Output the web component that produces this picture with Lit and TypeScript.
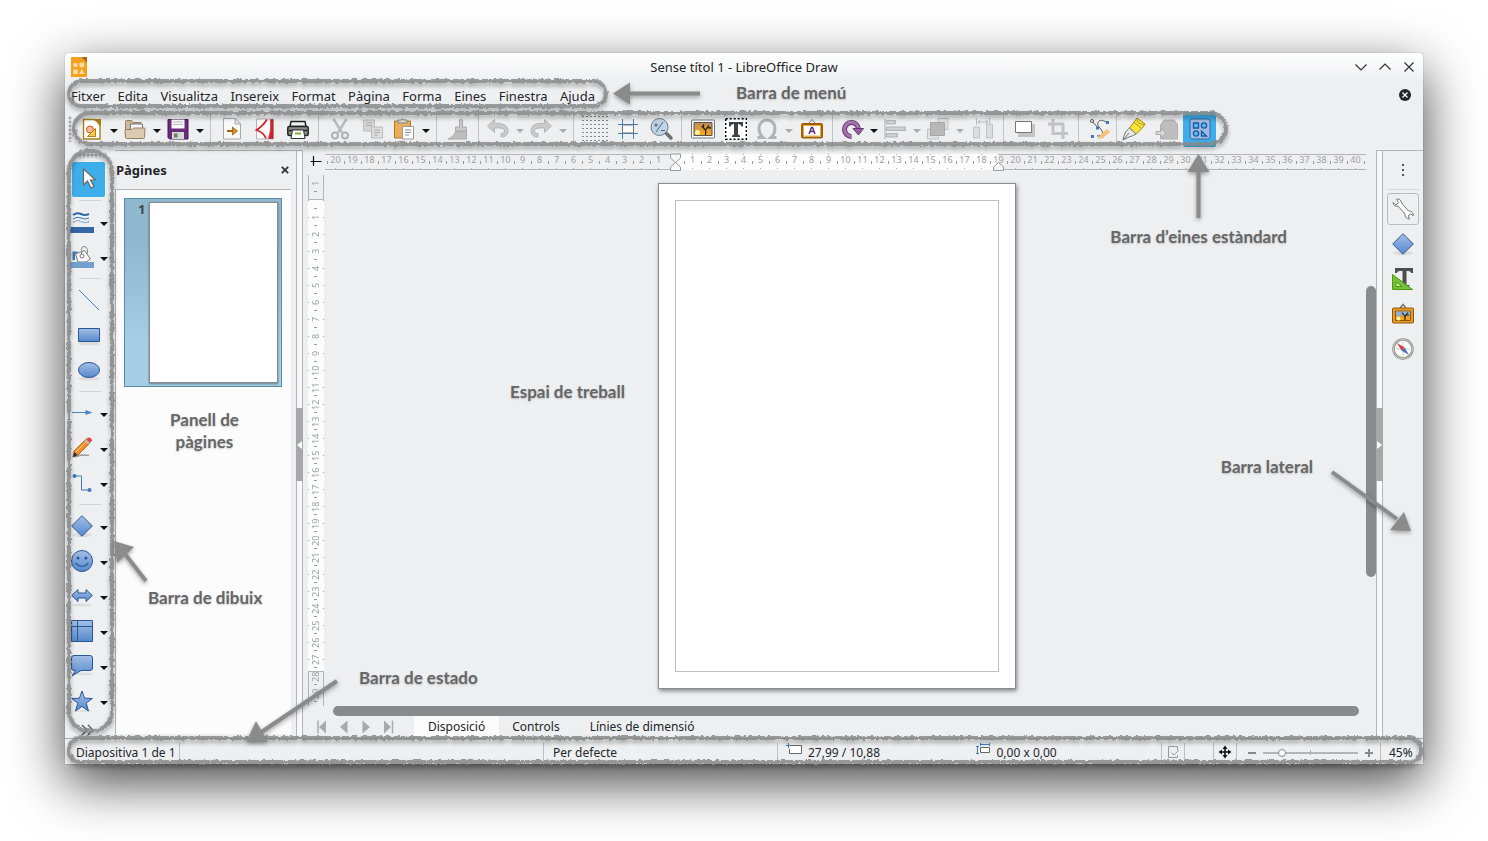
import { LitElement, html, svg, css, nothing } from "lit";
import { customElement } from "lit/decorators.js";
import { classMap } from "lit/directives/class-map.js";

const BLUE = "url(#blue)";
const NAVY = "#2c5596";

// Every glyph is drawn on a 22 x 22 grid.
const glyphs: Record<string, unknown> = {
  app: svg`<path d="M3 1h10l6 6v14H3z" fill="#f5a01d"/><path d="M13 1h6v6z" fill="#a8690a"/><circle cx="7.500" cy="9" r="2.300" fill="#fbdcae"/><path d="M11.500 6.700h4.600v4.600h-4.600zM5.200 13.500h4.600v4.500H5.200zM11 18l2.800-5 2.800 5z" fill="#fbdcae"/>`,
  new: svg`<path d="M2.500 1.500h10.500l6 6v13.500h-16.500z" fill="#fff" stroke="#a5811c" stroke-width="1.400"/><path d="M13 1h7v7z" fill="#a5811c"/><path d="M14 2.500l4 4h-4z" fill="#fff6d8"/><circle cx="9" cy="11.500" r="3.500" fill="#f7b79b" stroke="#d9531e"/><path d="M6.500 18.500l8-8v8z" fill="#f7c94b" stroke="#b97f10"/>`,
  open: svg`<path d="M1.500 19V3.500q0-1 1-1h5l1.500 2h8v4" fill="#cdb99c" stroke="#98805e"/><path d="M6.500 12V6h12v6" fill="#fafafa" stroke="#777"/><path d="M1.500 19.500l-.5-7q0-1 1-1h6l1.500-1.500H20q1 0 1 1l-.5 8.500q0 1-1 1h-17q-1 0-1-1z" fill="#dccbb0" stroke="#98805e"/>`,
  save: svg`<path d="M1 1.500h20V21H2.500L1 19.500z" fill="#6b2d7b" stroke="#47165a"/><path d="M4.500 1.500h13v9h-13z" fill="#fafafa"/><path d="M6 4h10M6 6.500h10" stroke="#bcbcbc"/><path d="M5 14h12v7H5z" fill="#d5d9d2"/><path d="M7 15.500h3.500v4H7z" fill="#6d7a6a"/>`,
  import: svg`<path d="M2.500 .5h12l5 5v15.500h-17z" fill="#f8f8f8" stroke="#aaa"/><path d="M14 .5v5.500h5.500" fill="#ddd" stroke="#aaa"/><path d="M6 13h7" stroke="#a86400" stroke-width="2"/><path d="M11.500 9l5 4-5 4z" fill="#d98e1f" stroke="#8f5500" stroke-width=".7"/>`,
  pdf: svg`<path d="M2.500 1h17v20h-17z" fill="#fafafa" stroke="#b5b5b5"/><path d="M13 1.500C10 6 7 9.500 2.500 12 8 14 10.500 16 12 20.500" fill="none" stroke="#d4212b" stroke-width="1.800"/><path d="M16.500 1.500H19v19h-4.500q3-8 2-19z" fill="#d4212b" stroke="#b5161f" stroke-width=".6"/>`,
  print: svg`<path d="M4 3.500h14l1 5H3z" fill="#f2f2f2" stroke="#222" stroke-width="1.500"/><rect x=".8" y="8.500" width="20.400" height="9" rx="1.500" fill="#8b8f8b" stroke="#222" stroke-width="1.500"/><path d="M2 12.500h18" stroke="#222" stroke-width="1.500"/><path d="M5.500 12h11l1.500 8.500H4z" fill="#fff" stroke="#333"/><path d="M8 15.500h6" stroke="#73b03b" stroke-width="2"/>`,
  cut: svg`<path d="M4.500 1l8.500 13.500M17.500 1L9 14.500" stroke="#bbb" stroke-width="2.500"/><circle cx="6" cy="17.500" r="3" fill="none" stroke="#b0b0b0" stroke-width="2"/><circle cx="16" cy="17.500" r="3" fill="none" stroke="#b0b0b0" stroke-width="2"/>`,
  copy: svg`<path d="M1.500 2h11v11h-11z" fill="#d5d5d5" stroke="#bbb"/><path d="M4 5h6M4 7.500h6" stroke="#aaa"/><path d="M9.500 9h11v11h-11z" fill="#ddd" stroke="#bbb"/><path d="M12 12h6M12 14.500h6M12 17h4" stroke="#aaa"/>`,
  paste: svg`<path d="M1.500 3h16v17h-16z" fill="#e9ae5b" stroke="#b27825"/><path d="M5 4V2h3q1.500-2.500 3 0h3v3H5z" fill="#d5d5d5" stroke="#888"/><path d="M9.500 8.500h11V21h-11z" fill="#fff" stroke="#999"/><path d="M12 12h6M12 14.500h6M12 17h4" stroke="#888"/>`,
  brush: svg`<path d="M12.500 2q1.500-2 3 0v7h4v4H8.500V9h4z" fill="#c9c9c9" stroke="#aaa"/><path d="M8.500 13.500H19.500V21H1q6-2 7.500-7.500z" fill="#bdbdbd" stroke="#aaa"/>`,
  undo: svg`<path d="M.5 8l7-6.500v4c9-1 13.500 2.500 13.500 7.500 0 4-3 6-7 6v-3.500c2.500 0 3.500-1 3.500-2.500 0-2.500-3-3.500-10-3v4.500z" fill="#cacaca" stroke="#b5b5b5"/>`,
  redo: svg`<path d="M21.500 8l-7-6.500v4C5.500 4.500 1 8 1 13c0 4 3 6 7 6v-3.500c-2.500 0-3.500-1-3.500-2.500 0-2.500 3-3.500 10-3v4.500z" fill="#cacaca" stroke="#b5b5b5"/>`,
  grid: svg`${[0, 1, 2, 3, 4, 5, 6].map((r) => [0, 1, 2, 3, 4, 5, 6].map((c) => svg`<path d="M${c * 4 - 1.5} ${r * 4 - 2}h1v1h-1z" fill="#222"/>`))}`,
  lines: svg`<path d="M5.500 1v20M16.500 1v20M1 6.500h20M1 15.500h20" stroke="#3f7fc0"/><path d="M5.500 7h11v8h-11z" fill="#fafafa" stroke="#777"/>`,
  zoom: svg`<path d="M15 14l6 6" stroke="#6e7070" stroke-width="3.500" stroke-linecap="round"/><circle cx="9.500" cy="9" r="8.500" fill="#c3d3e6" stroke="#6e7b86"/><path d="M4 7h4M6 5v4M11 12.500h4M6 14l7-10" stroke="#44658c"/>`,
  image: svg`<rect x="-.5" y="2" width="23" height="18" rx="1" fill="#fafafa" stroke="#777"/><path d="M2 4.500h18v13H2z" fill="url(#sunset)" stroke="#555"/><circle cx="5.500" cy="14.500" r="2.500" fill="#fff4a0"/><path d="M13.500 17q.5-4 0-5l-4-4M13.500 12l3.500-5M11.500 10v-4M15 9.500l4 .5" stroke="#35240f" stroke-width="1.300" fill="none"/>`,
  text: svg`<path d="M.7.700h20.600v20.600H.7z" fill="#fff" stroke="#000" stroke-width="1.400" stroke-dasharray="2 2"/><path d="M4 4h14v4.500h-1.500Q16 6 13 6v9.500q0 2 2 2V19H7v-1.500q2 0 2-2V6Q6 6 5.500 8.500H4z" fill="#3c4246"/>`,
  omega: svg`<path d="M1.500 19.500h5.500C3.500 16.500 3 13 3 10a8 8 0 0116 0c0 3-.5 6.500-4 9.500h5.500" fill="none" stroke="#b1b1b1" stroke-width="3"/>`,
  fontwork: svg`<path d="M8 5l3-3.500L14 5" fill="none" stroke="#777"/><rect x="1" y="6" width="20" height="13.500" rx="1" fill="#fff" stroke="#a05f05" stroke-width="2"/><rect x="2.500" y="7.500" width="17" height="10.500" fill="none" stroke="#efad4a"/><path d="M8 16l2.500-6.500h1L14 16M9 13.500h4" fill="none" stroke="#5c2e7e" stroke-width="1.500"/>`,
  rotate: svg`<path d="M10.500 18.500A7 7 0 1117.500 11" fill="none" stroke="#65356f" stroke-width="5"/><path d="M10 18.300A7 7 0 1117.500 11" fill="none" stroke="#a675ae" stroke-width="3"/><path d="M12 10.500h10.500l-5 6.500z" fill="#9661a0" stroke="#65356f"/>`,
  align: svg`<path d="M1 1v20" stroke="#aaa"/><path d="M2.500 2.500h9v3.500h-9zM2.500 9h19v3.500h-19zM2.500 15.500h11v3.500h-11z" fill="#cfcfcf" stroke="#b2b2b2"/>`,
  arrange: svg`<path d="M11 .5h10v11H11zM.5 11h11v10H.5z" fill="#e0e0e0" stroke="#c2c2c2"/><path d="M3.500 4.500h14v13h-14z" fill="#b8b8b8" stroke="#a7a7a7"/>`,
  distribute: svg`<path d="M1.500 9h6v11h-6zM14.500 6h6v14h-6z" fill="#dcdcdc" stroke="#c2c2c2"/><path d="M4.500 0v7M17.500 0v5M6 4h10M8 2L6 4l2 2M14 2l2 2-2 2" fill="none" stroke="#bbb"/>`,
  shadow: svg`<path d="M4 6h17v13H4z" fill="#c4c4c4"/><path d="M1.500 3.500h16v11h-16z" fill="#fff" stroke="#777"/>`,
  crop: svg`<path d="M6 1v14.500h15M1 6h15v15" fill="none" stroke="#c3c3c3" stroke-width="3"/>`,
  points: svg`<path d="M3 3l7 8M8 18c6 0 8-3 2-9C6 4 12 0 17 4" fill="none" stroke="#555"/><circle cx="3" cy="3" r="1.500" fill="#fff" stroke="#555"/><path d="M17 3h3v3h-3zM7 8.500h3v3H7zM2 17h3v3H2z" fill="#3c7bc4"/><path d="M9 21l2-4 7-6 3 3-7 6z" fill="#f4c07a"/>`,
  glue: svg`<path d="M14 0l8 6q-1 3-9 10L6.500 10z" fill="#f8e33c" stroke="#a18b12"/><path d="M14 1.500q0 4.500 7 5M11 4.500l7 5.500" stroke="#b79b10" fill="none"/><path d="M6.500 10l6.500 6q-3 2-7 3L0 22q1-8 6.500-12z" fill="#e9e9e4" stroke="#777"/><path d="M0 22l6-7" stroke="#777"/>`,
  extrusion: svg`<path d="M4.500 7L8 2h10l3.500 4v15h-17z" fill="#bdbdbd" stroke="#b0b0b0"/><path d="M0 13.500h5v-3l5 4.500-5 4.500v-3H0z" fill="#dadada" stroke="#aaa"/>`,
  shapes: svg`<rect x="1" y="1" width="20" height="20" rx="2" fill="#a0bbe0" stroke="#2f64a6"/><path d="M4.500 5h5v5h-5z" fill="#5bbcf0" stroke="#1c57a0" stroke-width="1.300"/><circle cx="15" cy="7.500" r="2.600" fill="#5bbcf0" stroke="#1c57a0" stroke-width="1.300"/><circle cx="7" cy="15.500" r="2.600" fill="#5bbcf0" stroke="#1c57a0" stroke-width="1.300"/><path d="M12.500 13v5h5z" fill="#5bbcf0" stroke="#1c57a0" stroke-width="1.300"/>`,
  select: svg`<path d="M5.500 1v16l4-4 3.500 7 3-1.500L12.500 12h5z" fill="#fff" stroke="#666" stroke-width="1.200"/>`,
  linecolor: svg`<path d="M2 4q4-3 8-1t8 0" fill="none" stroke="#2f66a8" stroke-width="2"/><path d="M2 8q4-3 8-1t8 0" fill="none" stroke="#3a74b5"/><path d="M2 11.500q4-3 8-1t8 0" fill="none" stroke="#3a74b5" stroke-dasharray="2 1"/><path d="M-1 16h24v6H-1z" fill="#3465a4"/>`,
  fillcolor: svg`<path d="M1.500 14V5.500h5v2H4v6.500z" fill="#3f78b7"/><path d="M4.500 8l9-3.500 6 8.500-4.500 3H7z" fill="#fafafa" stroke="#777"/><path d="M10.500 9V3.500q0-3 2.500-3t3.500 3v4" fill="none" stroke="#888"/><circle cx="11" cy="10" r="2" fill="#fff" stroke="#777"/><path d="M-1 16h24v6H-1z" fill="#729fcf"/>`,
  line: svg`<path d="M1 1l20 20" stroke="#3f78b7"/>`,
  rect: svg`<ellipse cx="11" cy="19.500" rx="11" ry="2" fill="#ddd"/><path d="M.5 4.500h21v13H.5z" fill="${BLUE}" stroke="${NAVY}"/>`,
  ellipse: svg`<ellipse cx="11" cy="19.500" rx="11" ry="2" fill="#ddd"/><ellipse cx="11" cy="11" rx="10.500" ry="7.500" fill="${BLUE}" stroke="${NAVY}"/>`,
  arrow: svg`<path d="M1 10.500h15" stroke="#4a86c2"/><path d="M14.500 8l7 2.500-7 2.500z" fill="#4a86c2"/>`,
  pencil: svg`<path d="M4 20q6-3 14-1.500" stroke="#999" stroke-width="1.500" fill="none"/><path d="M3 14L15 2l4 4L7 18l-5 2z" fill="#f28e2b" stroke="#a65b12" stroke-width=".8"/><path d="M4.500 15.500L16 4" stroke="#fcc98a"/><path d="M15 2l2-1.500q4 0 4 3L19 6z" fill="#e0454a"/><path d="M13.500 3.500l4 4L19 6l-4-4z" fill="#bbb"/><path d="M3.500 15l3 3-5 2.500z" fill="#333"/>`,
  connector: svg`<path d="M4 4h6.500v14H18" fill="none" stroke="#3f78b7"/><circle cx="3.500" cy="4" r="2" fill="#3f78b7"/><circle cx="18.500" cy="18" r="2" fill="#3f78b7"/>`,
  diamond: svg`<ellipse cx="11" cy="20" rx="10" ry="2" fill="#dcdcdc"/><path d="M11 .7L21.300 11 11 21.300.7 11z" fill="${BLUE}" stroke="${NAVY}"/>`,
  smiley: svg`<circle cx="11" cy="11" r="10.500" fill="${BLUE}" stroke="${NAVY}"/><circle cx="7" cy="8" r="1.500" fill="${NAVY}"/><circle cx="15" cy="8" r="1.500" fill="${NAVY}"/><path d="M4.500 13q6.500 7 13 0" fill="none" stroke="${NAVY}" stroke-width="1.200"/>`,
  both: svg`<ellipse cx="11" cy="20" rx="10" ry="1.500" fill="#ddd"/><path d="M.7 10.500L7 4.500v3.500h8V4.500l6.300 6-6.300 6V13H7v3.500z" fill="${BLUE}" stroke="${NAVY}"/>`,
  table: svg`<path d="M.5.500h21v21H.5z" fill="${BLUE}" stroke="${NAVY}"/><path d="M.5 6.500h21M6.500.500v21" stroke="${NAVY}"/>`,
  callout: svg`<ellipse cx="13" cy="19" rx="9" ry="1.500" fill="#ddd"/><path d="M3 .5h16q2.500 0 2.500 2.500v10q0 2.500-2.500 2.500h-9L1 21l3.500-5.500H3Q.5 15.500.5 13V3Q.5.500 3 .5z" fill="${BLUE}" stroke="${NAVY}"/>`,
  star: svg`<ellipse cx="11" cy="21" rx="9" ry="1" fill="#ddd"/><path d="M11 1l2.600 7.200 7.700.3-6.100 4.600L17.500 21 11 16.400 4.500 21l2.300-7.900L.7 8.500l7.700-.3z" fill="${BLUE}" stroke="${NAVY}"/>`,
  wrench: svg`<path d="M1 4.500l3 2.500 2.500-2.500L4.500 1Q9 .5 9.500 5l7 8q4-.5 5 4.500l-3-1.500-2.500 2 1.500 3q-5-.5-4.500-5l-7-8Q1.500 9 1 4.500z" fill="#fdfdfb" stroke="#777a73"/>`,
  styles: svg`<path d="M3 0h18v5h-2q0-2-3-2h-1.500v14h3v1H8v-1h2.500V3H8Q5 3 5 5H3z" fill="#4b4f51"/><path d="M.5 6.500l20 15H.5z" fill="#74c13c" stroke="#4e9a06"/><path d="M4 14l6 4.500H4z" fill="#d6efc2" stroke="#4e9a06"/>`,
  gallery: svg`<path d="M8 5l3-3.500L14 5" fill="none" stroke="#777" stroke-width="1.500"/><rect x=".5" y="5" width="21" height="15" rx="1" fill="#e99a2e" stroke="#8f5902"/><path d="M3.500 8h15v9.500h-15z" fill="url(#sunset)" stroke="#8f5902"/><path d="M4 8.500h14v4H4z" fill="#8fb0d6"/><circle cx="6.500" cy="15.500" r="2" fill="#fff4a0"/><path d="M13 17.500v-4l-3-4M13 13.500l3-4M14 12h3" stroke="#35240f" stroke-width="1.200" fill="none"/>`,
  compass: svg`<circle cx="11" cy="11" r="9.500" fill="#fafafa" stroke="#888a85" stroke-width="2.500"/><circle cx="11" cy="11" r="9.500" fill="none" stroke="#d3d7cf"/><path d="M11 4v14M4 11h14" stroke="#ccc"/><path d="M5 5l7.500 4.500-3 3z" fill="#e03a3e"/><path d="M17 17l-7.500-4.500 3-3z" fill="#4a72b0"/>`,
  first: svg`<path d="M7 4.500v13" stroke="#a8aaab" stroke-width="1.500"/><path d="M15 4.500v13L8 11z" fill="#a8aaab"/>`,
  prev: svg`<path d="M14.500 4.500v13L7 11z" fill="#a8aaab"/>`,
  next: svg`<path d="M7.500 4.500v13L15 11z" fill="#a8aaab"/>`,
  last: svg`<path d="M15.500 4.500v13" stroke="#a8aaab" stroke-width="1.500"/><path d="M7 4.500v13l7-6.500z" fill="#a8aaab"/>`,
  pos: svg`<path d="M6.500 3.500h11v8h-12v-6" fill="#fff" stroke="#666"/><path d="M1.500 3h5v4h-5z" fill="#eeeff1"/><path d="M4.500 1v5M2 3.500h5" stroke="#3f7fc0"/>`,
  size: svg`<path d="M7.500 5.500h9v5h-9z" fill="#fff" stroke="#666"/><path d="M7 2.500h10M7.500 1v3M16.500 1v3M4.500 5v6M3 4.500h3M3 11.500h3" stroke="#3f7fc0"/>`,
  sign: svg`<path d="M15.500 8V4.500h-9v11h9V13" fill="none" stroke="#999"/><path d="M9.500 10.500l2.500 2.500 5-5" fill="none" stroke="#999"/>`,
  fit: svg`<path d="M11 5v10M6 10h10" stroke="#111" stroke-width="1.600"/><path d="M11 3.500L8.500 7h5zM11 16.500L8.500 13h5zM4.500 10L8 7.500v5zM17.500 10L14 7.500v5z" fill="#111"/>`,
  min: svg`<path d="M5.500 8.500l5.500 5.500 5.500-5.500" fill="none" stroke="#333" stroke-width="1.200"/>`,
  max: svg`<path d="M5.500 13.500L11 8l5.500 5.500" fill="none" stroke="#333" stroke-width="1.200"/>`,
  close: svg`<path d="M6.500 6.500l9 9M15.500 6.500l-9 9" stroke="#333" stroke-width="1.200"/>`,
  closeDoc: svg`<circle cx="11" cy="10" r="6" fill="#232629"/><path d="M8.500 7.500l5 5M13.500 7.500l-5 5" stroke="#fff" stroke-width="1.300"/>`,
  closePanel: svg`<path d="M7.500 7.500l7 7M14.500 7.500l-7 7" stroke="#333" stroke-width="2"/>`,
  dots: svg`<path d="M10 5h2v2h-2zM10 10h2v2h-2zM10 15h2v2h-2z" fill="#555"/>`,
  more: svg`<path d="M6 6l5 5-5 5M12 6l5 5-5 5" fill="none" stroke="#555" stroke-width="1.200"/>`,
  minus: svg`<path d="M7 11h8" stroke="#888" stroke-width="2"/>`,
  plus: svg`<path d="M7 11h8M11 7v8" stroke="#888" stroke-width="2"/>`,
  origin: svg`<path d="M4.500 11.500h11M7.500 6v10" stroke="#111" stroke-width="1.200"/>`,
};

const icon = (name: string) => html`<svg class="icon" viewBox="0 0 22 22" aria-hidden="true">${glyphs[name]}</svg>`;

interface Tool {
  id: string;
  label: string;
  menu?: boolean;
  off?: boolean;
  active?: boolean;
}

const t = (id: string, label: string, opts: Partial<Tool> = {}): Tool => ({ id, label, ...opts });

const STANDARD: Tool[][] = [
  [t("new", "Nou", { menu: true }), t("open", "Obre", { menu: true }), t("save", "Desa", { menu: true })],
  [t("import", "Exporta"), t("pdf", "Exporta com a PDF"), t("print", "Imprimeix")],
  [t("cut", "Retalla", { off: true }), t("copy", "Copia", { off: true }), t("paste", "Enganxa", { menu: true })],
  [t("brush", "Clona el format", { off: true })],
  [t("undo", "Desfés", { menu: true, off: true }), t("redo", "Refés", { menu: true, off: true })],
  [t("grid", "Graella"), t("lines", "Línies d'ajuda"), t("zoom", "Zoom")],
  [t("image", "Imatge"), t("text", "Quadre de text"), t("omega", "Caràcter especial", { menu: true, off: true }), t("fontwork", "Fontwork")],
  [
    t("rotate", "Transformacions", { menu: true }),
    t("align", "Alineació", { menu: true, off: true }),
    t("arrange", "Ordena", { menu: true, off: true }),
    t("distribute", "Distribució", { off: true }),
  ],
  [t("shadow", "Ombra"), t("crop", "Escapça", { off: true })],
  [t("points", "Edita els punts")],
];
const SHAPES: Tool[] = [t("glue", "Punts d'adherència"), t("extrusion", "Extrusió", { off: true }), t("shapes", "Funcions de dibuix", { active: true })];

const DRAWING: Tool[][] = [
  [t("select", "Selecciona", { active: true })],
  [t("linecolor", "Color de la línia", { menu: true }), t("fillcolor", "Color d'emplenament", { menu: true })],
  [t("line", "Línia"), t("rect", "Rectangle"), t("ellipse", "El·lipse")],
  [t("arrow", "Línies i fletxes", { menu: true }), t("pencil", "Corbes i polígons", { menu: true }), t("connector", "Connectors", { menu: true })],
  [
    t("diamond", "Formes bàsiques", { menu: true }),
    t("smiley", "Símbols", { menu: true }),
    t("both", "Fletxes de bloc", { menu: true }),
    t("table", "Diagrames de flux", { menu: true }),
    t("callout", "Llegendes", { menu: true }),
    t("star", "Estrelles", { menu: true }),
  ],
];

const MENUS = ["Fitxer", "Edita", "Visualitza", "Insereix", "Format", "Pàgina", "Forma", "Eines", "Finestra", "Ajuda"];
const DECKS = [
  ["wrench", "Propietats"],
  ["diamond", "Formes"],
  ["styles", "Estils"],
  ["gallery", "Galeria"],
  ["compass", "Navegador"],
];
const range = (from: number, to: number) => Array.from({ length: to - from + 1 }, (_, i) => from + i);

const tool = (b: Tool) => html`
  <button
    class=${classMap({ tool: true, split: !!b.menu, active: !!b.active })}
    aria-label=${b.label}
    title=${b.label}
  >${icon(b.id)}</button>${b.menu
    ? html`<button class=${classMap({ drop: true, off: !!b.off })} aria-label=${b.label + ": més"}></button>`
    : nothing}`;

@customElement("app-root")
export class AppRoot extends LitElement {
  static styles = css`
    :host {
      --line: #b4b5b6;
      --mark: #8a8b8a;
      display: block;
      box-sizing: border-box;
      height: 100vh;
      padding: 53px 65px 77px;
      overflow: hidden;
      background: #fff;
      color: #232629;
      font: 13px/18px "Noto Sans", sans-serif;
    }
    * { box-sizing: border-box; }
    button, input { font: inherit; color: inherit; margin: 0; padding: 0; border: 0; background: none; }
    button { display: flex; align-items: center; justify-content: center; flex: none; }
    .icon { width: 22px; height: 22px; overflow: visible; flex: none; display: block; }
    .defs { position: absolute; width: 0; height: 0; }

    .window {
      position: relative;
      display: flex;
      flex-direction: column;
      height: 100%;
      background: #eeeff1;
      border-radius: 4px 4px 0 0;
      box-shadow: 0 0 1px rgba(0, 0, 0, 0.5), 0 18px 54px rgba(0, 0, 0, 0.75);
    }
    .titlebar {
      display: grid;
      grid-template-columns: 1fr auto 1fr;
      align-items: center;
      height: 29px;
      padding: 0 3px 2px;
      border-radius: 4px 4px 0 0;
      background: linear-gradient(#fff, #eeeff1);
    }
    .title { margin: 0; font-size: 13px; font-weight: 400; }
    .winbtns { display: flex; justify-content: flex-end; gap: 2px; }
    .menurow { display: flex; justify-content: space-between; align-items: center; height: 28px; padding-right: 7px; }
    .menubar { position: relative; display: flex; justify-content: space-between; width: 536px; height: 28px; }
    .menubar button { padding: 0 6px; }

    .capsule { position: absolute; z-index: 3; pointer-events: none; overflow: visible; filter: drop-shadow(0 3px 2px rgba(0, 0, 0, 0.35)); }
    .capsule rect { fill: none; stroke: var(--mark); stroke-opacity: 0.85; stroke-width: 4px; width: 100%; height: 100%; }
    .around-menu { left: 4px; top: -1px; width: calc(100% + 1px); height: 25px; }
    .around-tools { left: 9px; top: 3px; width: calc(100% + 1px); height: 31px; }
    .around-draw { left: 4px; top: 1px; width: calc(100% - 7px); height: calc(100% - 8px); }
    .around-status { left: 4px; top: -1px; width: calc(100% - 6px); height: 24px; }

    .toolrow { display: flex; height: 40px; }
    .toolbar { position: relative; display: flex; height: 38px; padding-left: 3px; }
    .grip { flex: none; width: 4px; margin: 6px 5px 6px 0; background: radial-gradient(circle, #aaabac 1px, transparent 2px) 0 0 / 4px 4px; }
    .group { flex: none; display: flex; align-items: center; }
    .tool { width: 33px; height: 35px; }
    .tool.split { width: 30px; }
    .tool.active { background: #3daee9; border-radius: 2px; }
    .drop { width: 13px; height: 35px; }
    .drop::before { content: ""; border: 4px solid transparent; border-top-color: #111; border-bottom: 0; margin-top: 4px; }
    .drop.off::before { border-top-color: #aaa; }
    .toolbar .sep { width: 1px; height: 31px; margin: 4px; background: #c4c5c6; }
    .toolbar .sep.tight { margin: 4px 0; }

    .main { flex: 1; display: flex; min-height: 0; }
    .drawbar { position: relative; display: flex; flex-direction: column; flex: none; width: 50px; padding: 3px 4px 0 2px; }
    .drawbar .grip { width: 28px; height: 5px; margin: 0 0 4px 7px; }
    .drawbar .group { flex-wrap: wrap; justify-content: center; }
    .drawbar .tool { width: 44px; padding-bottom: 1px; }
    .drawbar .tool.split { width: 30px; }
    .drawbar .tool.active { width: 33px; margin-right: 1px; }
    .drawbar .drop { width: 14px; }
    .drawbar .drop::before { margin-top: 3px; }
    .drawbar .sep { flex: none; height: 1px; margin: 3px 10px 4px 12px; background: #d3d4d5; }
    .drawbar .more { height: 22px; width: 40px; }

    .panel { flex: none; display: flex; flex-direction: column; width: 181px; border-top: 1px solid var(--line); padding-right: 5px; }
    .panelhead { display: flex; align-items: center; justify-content: space-between; height: 38px; padding-left: 1px; }
    .panelhead h2 { margin: 0; font-size: 13px; font-weight: 700; }
    .panelhead .icon { width: 20px; margin-right: -4px; }
    .pages { flex: 1; margin-bottom: 4px; padding: 8px 9px 8px 8px; background: #fcfcfc; border: solid var(--line); border-width: 1px 0 0 1px; }
    .thumb {
      display: flex;
      justify-content: space-between;
      align-items: flex-start;
      width: 100%;
      padding: 3px 3px 3px 13px;
      font-weight: 700;
      color: #44494d;
      border: 1px solid #5c8ba5;
      background: linear-gradient(#8fb7ce, #8fb7ce 22%, #a5cfe6 78%, #a5cfe6);
    }
    .thumb .sheet { width: 129px; height: 181px; background: #fff; border: 1px solid #888; box-shadow: 0 1px 2px rgba(0, 0, 0, 0.4); }
    .thumb .num { line-height: 14px; }

    .splitter {
      flex: none;
      width: 7px;
      display: flex;
      flex-direction: column;
      align-items: center;
      justify-content: center;
      border: solid var(--line);
      border-width: 1px 1px 0;
      background: #f7f8f9;
    }
    .handle { width: 7px; height: 73px; background: #a6a8a8; }
    .handle::before { content: ""; border: 4px solid transparent; border-right: 5px solid #fff; border-left: 0; }
    .handle.right::before { border-left: 5px solid #fff; border-right: 0; }

    .work { flex: 1; min-width: 0; display: flex; flex-direction: column; padding-left: 5px; }
    .upper { flex: 1; min-height: 0; display: grid; grid-template: 25px 1fr / 17px minmax(0, 1fr) 10px; }
    .originbtn { width: 17px; height: 22px; }
    .hruler, .vruler { font-size: 9px; line-height: 13px; color: #9fa0a1; display: flex; }
    .hruler {
      height: 16px;
      margin-top: 4px;
      padding-left: 2px;
      line-height: 12px;
      overflow-x: clip;
      background:
        linear-gradient(#fcfcfc, #fcfcfc) 350px 0 / 323px 100% no-repeat,
        linear-gradient(var(--line), var(--line)) 0 0 / 100% 1px no-repeat,
        linear-gradient(var(--line), var(--line)) 0 100% / 100% 1px no-repeat;
    }
    .hruler .cm {
      flex: none;
      width: 17px;
      text-align: center;
      background:
        linear-gradient(#999, #999) 0 50% / 1px 3px no-repeat,
        linear-gradient(#aaa, #aaa) 50% 0 / 1px 1px no-repeat,
        linear-gradient(#aaa, #aaa) 50% 14px / 1px 1px no-repeat;
    }
    .hruler .cm.zero { background: none; }
    .marker { display: block; width: 13px; height: 16px; margin: 0 auto; overflow: visible; }
    .hruler .cm.end { position: relative; }
    .cm.end .marker { position: absolute; left: 2px; top: 0; }
    .vruler {
      flex-direction: column;
      width: 16px;
      overflow: hidden;
      background:
        linear-gradient(#fcfcfc, #fcfcfc) 0 25px / 100% 471px no-repeat,
        linear-gradient(var(--line), var(--line)) 0 24px / 100% 473px no-repeat,
        linear-gradient(var(--line), var(--line)) 0 0 / 1px 100% no-repeat,
        linear-gradient(var(--line), var(--line)) 100% 0 / 1px 100% no-repeat;
    }
    .vruler .cm {
      flex: none;
      height: 17px;
      width: 16px;
      line-height: 16px;
      writing-mode: vertical-rl;
      transform: rotate(180deg);
      text-align: center;
      background:
        linear-gradient(#999, #999) 50% 0 / 3px 1px no-repeat,
        linear-gradient(#aaa, #aaa) 0 50% / 1px 1px no-repeat,
        linear-gradient(#aaa, #aaa) 100% 50% / 1px 1px no-repeat;
    }
    .canvas { display: flex; justify-content: center; align-items: flex-start; padding: 8px 17px 0 0; overflow: hidden; }
    .page {
      width: 358px;
      height: 506px;
      padding: 16px;
      background: #fff;
      border: 1px solid #8b8c91;
      box-shadow: 1px 2px 4px rgba(60, 60, 70, 0.6);
    }
    .margins { height: 100%; border: 1px solid #bfbfbf; }
    .vscroll { grid-column: 3; grid-row: 1 / 3; display: flex; padding-top: 136px; }
    .vscroll .bar { width: 10px; height: 291px; }
    .bar { background: #878b8b; border-radius: 5px; }
    .hscroll { padding: 0 17px 0 25px; }
    .hscroll .bar { height: 10px; }
    .tabs { display: flex; height: 22px; padding-left: 3px; }
    .tabs .nav { width: 22px; }
    .navs { display: flex; width: 103px; }
    .tabs .tab { padding: 1px 14px 0; font-size: 12px; height: 21px; }
    .tabs .tab + .tab { padding: 1px 12px 0 13px; }
    .tabs .tab + .tab + .tab { padding-left: 18px; }
    .tabs .tab.on { background: #fcfcfc; }

    .sidebar { flex: none; width: 40px; display: flex; flex-direction: column; align-items: center; gap: 3px; border-top: 1px solid var(--line); }
    .sidebar .menu { width: 32px; height: 39px; border-bottom: 1px solid #d8d9da; }
    .deck { width: 32px; height: 32px; border-radius: 3px; }
    .deck.on { border: 1px solid #b9babb; }

    .statusbar { position: relative; display: flex; height: 26px; font-size: 12px; border-top: 1px solid #a5a6a7; }
    .cell { display: flex; align-items: center; margin: 4px 0 3px; padding-top: 1px; border-right: 1px solid #bdbebf; min-width: 0; white-space: nowrap; }
    .cell.s1 { flex: none; width: 115px; padding-left: 11px; }
    .cell.s2 { flex: 1 1 364px; }
    .cell.s3 { flex: 1 1 234px; padding-left: 9px; }
    .cell.s4 { flex: 1 1 384px; padding-left: 6px; }
    .half { flex: 1; display: flex; align-items: center; gap: 2px; }
    .cell.s5, .cell.s7 { flex: none; width: 23px; justify-content: center; }
    .cell.s6 { flex: none; width: 29px; }
    .cell.s8 { flex: none; width: 144px; padding: 1px 0 0 4px; }
    .cell.s9 { flex: none; width: 42px; border: 0; padding-left: 8px; }
    .slider {
      -webkit-appearance: none;
      appearance: none;
      flex: 1;
      min-width: 0;
      height: 16px;
      background:
        linear-gradient(#aaa, #aaa) 50% 50% / 1px 5px no-repeat,
        linear-gradient(#b3b4b5, #b3b4b5) 0 50% / 100% 2px no-repeat;
    }
    .slider::-webkit-slider-thumb { -webkit-appearance: none; width: 8px; height: 8px; border-radius: 50%; background: #fff; border: 1px solid #888; }

    .notes { position: absolute; inset: 0; z-index: 4; pointer-events: none; }
    .arrows { position: absolute; inset: 0; width: 100%; height: 100%; overflow: visible; filter: drop-shadow(0 2px 2px rgba(0, 0, 0, 0.35)); }
    .arrows g { stroke: var(--mark); fill: var(--mark); stroke-width: 4px; }
    .note { position: absolute; margin: 0; font: 700 17px/22px Lato, sans-serif; color: #666; text-align: center; white-space: nowrap; text-shadow: 0 1px 2px rgba(0, 0, 0, 0.2); }
    .n-menu { left: 671px; top: 29px; }
    .n-tools { right: 136px; top: 173px; }
    .n-work { left: 445px; top: 328px; }
    .n-side { right: 110px; top: 403px; }
    .n-pages { left: 105px; top: 356px; }
    .n-draw { left: 83px; top: 534px; }
    .n-status { left: 294px; bottom: 75px; }
  `;

  render() {
    return html`
      <svg class="defs" aria-hidden="true">
        <defs>
          <linearGradient id="blue" x1="0" y1="0" x2="0" y2="1">
            <stop offset="0" stop-color="#a3c0e6" /><stop offset="1" stop-color="#5588cc" />
          </linearGradient>
          <linearGradient id="sunset" x1="0" y1="0" x2="0" y2="1">
            <stop offset="0" stop-color="#b9915a" /><stop offset="1" stop-color="#ffa818" />
          </linearGradient>
          <filter id="rough" filterUnits="userSpaceOnUse" x="-10" y="-10" width="1500" height="800">
            <feTurbulence type="fractalNoise" baseFrequency="0.3" numOctaves="2" result="n" />
            <feDisplacementMap in="SourceGraphic" in2="n" scale="4" xChannelSelector="R" yChannelSelector="G" />
          </filter>
        </defs>
      </svg>
      <div class="window">
        <header class="titlebar">
          ${icon("app")}
          <h1 class="title">Sense títol 1 - LibreOffice Draw</h1>
          <div class="winbtns">
            <button aria-label="Minimitza">${icon("min")}</button>
            <button aria-label="Maximitza">${icon("max")}</button>
            <button aria-label="Tanca">${icon("close")}</button>
          </div>
        </header>
        <div class="menurow">
          <nav class="menubar">
            ${MENUS.map((m) => html`<button>${m}</button>`)}
            ${this.capsule("around-menu", 13)}
          </nav>
          <button aria-label="Tanca el document">${icon("closeDoc")}</button>
        </div>
        <div class="toolrow">
          <div class="toolbar" role="toolbar" aria-label="Estàndard">
            <span class="grip"></span>
            ${STANDARD.map((g, i) => html`${i ? html`<span class="sep"></span>` : nothing}<div class="group">${g.map(tool)}</div>`)}
            <span class="sep tight"></span>
            <div class="group">${SHAPES.map(tool)}</div>
            ${this.capsule("around-tools", 16)}
          </div>
        </div>
        <div class="main">
          <div class="drawbar" role="toolbar" aria-label="Dibuix">
            <span class="grip"></span>
            ${DRAWING.map((g, i) => html`${i ? html`<span class="sep"></span>` : nothing}<div class="group">${g.map(tool)}</div>`)}
            <button class="more" aria-label="Més eines">${icon("more")}</button>
            ${this.capsule("around-draw", 20)}
          </div>
          <section class="panel">
            <div class="panelhead">
              <h2>Pàgines</h2>
              <button aria-label="Tanca el panell">${icon("closePanel")}</button>
            </div>
            <div class="pages">
              <button class="thumb"><span class="num">1</span><span class="sheet"></span></button>
            </div>
          </section>
          <div class="splitter"><button class="handle" aria-label="Amaga el panell"></button></div>
          <main class="work">
            <div class="upper">
              <button class="originbtn" aria-label="Origen">${icon("origin")}</button>
              <div class="hruler">${range(-20, 41).map((n) => this.cm(n))}</div>
              <div class="vruler">${range(-1, 29).map((n) => html`<span class="cm">${n ? Math.abs(n) : nothing}</span>`)}</div>
              <div class="canvas"><div class="page"><div class="margins"></div></div></div>
              <div class="vscroll"><div class="bar"></div></div>
            </div>
            <div class="hscroll"><div class="bar"></div></div>
            <div class="tabs">
              <div class="navs">
                <button class="nav" aria-label="Primera">${icon("first")}</button>
                <button class="nav" aria-label="Anterior">${icon("prev")}</button>
                <button class="nav" aria-label="Següent">${icon("next")}</button>
                <button class="nav" aria-label="Última">${icon("last")}</button>
              </div>
              <button class="tab on">Disposició</button>
              <button class="tab">Controls</button>
              <button class="tab">Línies de dimensió</button>
            </div>
          </main>
          <div class="splitter"><button class="handle right" aria-label="Amaga la barra lateral"></button></div>
          <aside class="sidebar">
            <button class="menu" aria-label="Paràmetres">${icon("dots")}</button>
            ${DECKS.map(([id, label], i) => html`<button class=${classMap({ deck: true, on: i === 0 })} aria-label=${label}>${icon(id)}</button>`)}
          </aside>
        </div>
        <footer class="statusbar">
          <div class="cell s1">Diapositiva 1 de 1</div>
          <div class="cell s2"></div>
          <div class="cell s3">Per defecte</div>
          <div class="cell s4">
            <span class="half">${icon("pos")}<span>27,99 / 10,88</span></span>
            <span class="half">${icon("size")}<span>0,00 x 0,00</span></span>
          </div>
          <div class="cell s5">${icon("sign")}</div>
          <div class="cell s6"></div>
          <div class="cell s7">${icon("fit")}</div>
          <div class="cell s8">
            <button aria-label="Redueix">${icon("minus")}</button>
            <input class="slider" type="range" min="0" max="100" value="17" aria-label="Zoom" />
            <button aria-label="Amplia">${icon("plus")}</button>
          </div>
          <div class="cell s9">45%</div>
          ${this.capsule("around-status", 11)}
        </footer>
        <div class="notes">
          <svg class="arrows" aria-hidden="true">
            <g>
              <path d="M635 40.500H562" /><path d="M548 40.500l17-11v22z" stroke="none" />
              <path d="M81 528L60 501" /><path d="M49 488l20 6-17 16z" stroke="none" />
              <path d="M272 628l-77 52" /><path d="M181 689l10-21 12 21z" stroke="none" />
            </g>
            <svg x="100%" overflow="visible">
              <g>
                <path d="M-224.500 165v-48" /><path d="M-224.500 101l11 18h-22z" stroke="none" />
                <path d="M-91 419l65 47" /><path d="M-12 478l-21-1 14-18z" stroke="none" />
              </g>
            </svg>
          </svg>
          <p class="note n-menu">Barra de menú</p>
          <p class="note n-tools">Barra d’eines estàndard</p>
          <p class="note n-work">Espai de treball</p>
          <p class="note n-side">Barra lateral</p>
          <p class="note n-pages">Panell de<br />pàgines</p>
          <p class="note n-draw">Barra de dibuix</p>
          <p class="note n-status">Barra de estado</p>
        </div>
      </div>
    `;
  }

  private capsule(place: string, radius: number) {
    return html`<svg class="capsule ${place}" aria-hidden="true"><rect rx=${radius} filter="url(#rough)" /></svg>`;
  }

  private cm(n: number) {
    if (n === 0) {
      return html`<span class="cm zero"><svg class="marker" viewBox="0 0 13 16"><path d="M1.500 0h10v4l-5 4.500 5 4.500v3.500h-10V13l5-4.500-5-4.500z" fill="#f6f7f8" stroke="#999" /></svg></span>`;
    }
    if (n === 19) {
      return html`<span class="cm end">19<svg class="marker" viewBox="0 0 13 16"><path d="M1.500 16.500V13l5-4.500 5 4.500v3.500z" fill="#f6f7f8" stroke="#999" /></svg></span>`;
    }
    return html`<span class="cm">${n === 41 ? nothing : Math.abs(n)}</span>`;
  }
}
